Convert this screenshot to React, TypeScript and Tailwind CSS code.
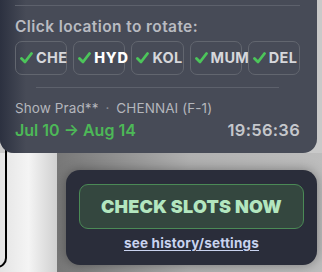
const chips = [
  { code: "CHE", active: false },
  { code: "HYD", active: true },
  { code: "KOL", active: false },
  { code: "MUM", active: false },
  { code: "DEL", active: false },
];

function Check() {
  return (
    <svg width="13" height="12" viewBox="0 0 13 12" className="shrink-0">
      <path d="M1.5 6.5 L5 10 L11.5 1.5" fill="none" stroke="#4cc55a" strokeWidth="2.8" strokeLinecap="round" strokeLinejoin="round" />
    </svg>
  );
}

export default function App() {
  return (
    <div
      className="relative h-[272px] w-[322px] overflow-hidden bg-[#c9c9c9]"
      style={{ fontFamily: "Inter, 'Noto Sans', sans-serif" }}
    >
      {/* top panel */}
      <div className="relative z-10 mr-[5px] h-[153px] overflow-hidden rounded-b-[14px] bg-[#474b57] pl-[15px] pr-[17px] pt-[5px]">
        <div className="pointer-events-none absolute inset-y-0 left-0 w-[26px] bg-gradient-to-r from-[#2c3140] to-transparent" />
        <div className="relative">
          <div className="h-px bg-[#5d616c]" />
          <div className="mt-[12px] text-[15.5px] font-semibold leading-[18px] tracking-[0.4px] text-[#b9bbc1]">
            Click location to rotate:
          </div>
          <div className="mt-[5px] grid grid-cols-5 gap-[6px]">
            {chips.map((c) => (
              <div
                key={c.code}
                className="flex h-[34px] items-center gap-[3px] rounded-[7px] border border-[#62666f] pl-[4px] whitespace-nowrap"
              >
                <Check />
                <span
                  className={
                    c.active
                      ? "text-[14.5px] font-extrabold tracking-[0.8px] text-white"
                      : "text-[14.5px] font-bold tracking-[0.3px] text-[#d6d7db]"
                  }
                >
                  {c.code}
                </span>
              </div>
            ))}
          </div>
          <div className="mx-[21px] mt-[12px] h-px bg-[#5d616c]" />
          <div className="mt-[12px] text-[13.5px] leading-[16px] tracking-[0.1px] text-[#b4b6bc]">
            Show Prad** <span className="mx-[3px] text-[#8a8d95]">·</span> CHENNAI (F-1)
          </div>
          <div className="mt-[4px] flex items-center justify-between text-[16px] font-semibold leading-[20px]">
            <span className="text-[#4db857]">Jul 10 → Aug 14</span>
            <span className="text-[16.5px] tracking-[0.3px] text-[#c5c7cc]">19:56:36</span>
          </div>
        </div>
      </div>

      {/* lower area */}
      <div className="flex h-[119px]">
        <div className="relative w-[57px] bg-gradient-to-r from-[#e4e4e4] via-[#f4f4f4] to-[#d0d0d0]">
          <div className="absolute left-[-20px] top-[-10px] h-[125px] w-[27px] rounded-br-[10px] border-r-2 border-b-2 border-black" />
        </div>
        <div className="flex flex-1 bg-gradient-to-r from-[#777777] via-[#b0b0b0] to-[#bdbdbd] pl-[9px] pr-[5px] pt-[17px]">
          <div className="flex h-[95px] flex-1 flex-col items-center rounded-[14px] bg-[#2a2d3a] px-[13px] pt-[14px] shadow-[0_0_12px_rgba(0,0,0,0.35)]">
            <button className="flex h-[45px] w-full items-center justify-center rounded-[9px] border border-[#4b8a56] bg-[#34473f] text-[18px] font-black tracking-[0.2px] text-[#b3e6bf]">
              CHECK SLOTS NOW
            </button>
            <a className="mt-[6px] text-[13.5px] font-bold leading-[16px] tracking-[0.2px] text-[#c9d3ef] underline underline-offset-2">
              see history/settings
            </a>
          </div>
        </div>
      </div>
    </div>
  );
}
